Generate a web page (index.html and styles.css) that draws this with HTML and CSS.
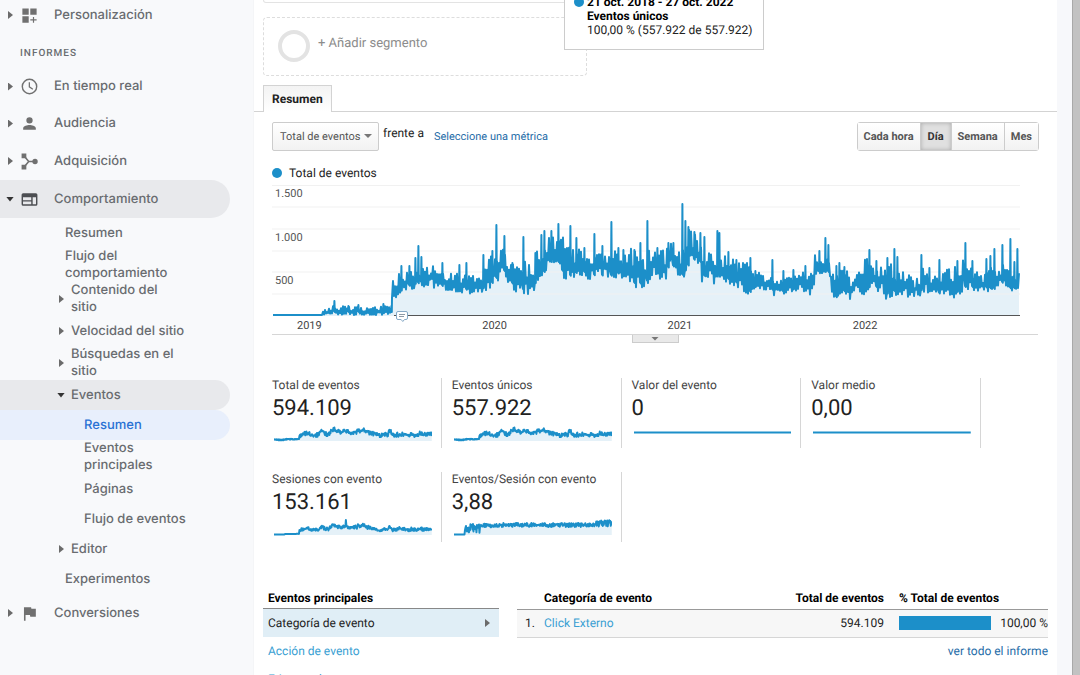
FILE: index.html
```html
<!DOCTYPE html>
<html lang="es">
<head>
<meta charset="utf-8">
<title>Eventos - Resumen</title>
<link rel="stylesheet" href="styles.css">
</head>
<body>
<div class="app">
  <nav class="sidebar" aria-label="Informes">
    <a class="nav-item nav-first" href="#"><span class="caret"></span><svg class="nav-icon" viewBox="0 0 24 24"><path d="M3 3h8v8H3zM13 3h8v8h-8zM3 13h8v8H3zM16.300 14h1.500v2.800H21v1.500h-3.200V21h-1.500v-2.700H13v-1.500h3.300z"/></svg>Personalización</a>
    <h2 class="nav-heading">INFORMES</h2>
    <a class="nav-item" href="#"><span class="caret"></span><svg class="nav-icon" viewBox="0 0 24 24"><path d="M12 2a10 10 0 1 0 0 20 10 10 0 0 0 0-20zm0 18.200a8.200 8.200 0 1 1 0-16.400 8.200 8.200 0 0 1 0 16.400zM12.600 6.500H11v6.300l4.800 3.200.9-1.300-4.100-2.700z"/></svg>En tiempo real</a>
    <a class="nav-item" href="#"><span class="caret"></span><svg class="nav-icon" viewBox="0 0 24 24"><path d="M12 12a4 4 0 1 0 0-8 4 4 0 0 0 0 8zm0 2c-2.670 0-8 1.340-8 4v2h16v-2c0-2.660-5.330-4-8-4z"/></svg>Audiencia</a>
    <a class="nav-item" href="#"><span class="caret"></span><svg class="nav-icon" viewBox="0 0 24 24"><path d="M2 2h6v6H2zM2 16h6v6H2z"/><circle cx="19" cy="12" r="3.400"/><path class="icon-line" d="M6 6l5 6-5 6M11 12h7"/></svg>Adquisición</a>
    <a class="nav-item nav-open" href="#"><span class="caret caret-down"></span><svg class="nav-icon" viewBox="0 0 24 24"><path fill-rule="evenodd" d="M4 4h16a2 2 0 0 1 2 2v12a2 2 0 0 1-2 2H4a2 2 0 0 1-2-2V6a2 2 0 0 1 2-2zM3.800 9.200v3.600h10.400V9.200zM3.800 14.500V18h10.400v-3.500zM16 9.200V18h4.200V9.200z"/></svg>Comportamiento</a>
    <a class="nav-sub" href="#">Resumen</a>
    <a class="nav-sub nav-two" href="#">Flujo del<br>comportamiento</a>
    <a class="nav-sub nav-two nav-parent" href="#"><span class="caret"></span><span>Contenido del<br>sitio</span></a>
    <a class="nav-sub nav-parent" href="#"><span class="caret"></span>Velocidad del sitio</a>
    <a class="nav-sub nav-two nav-parent" href="#"><span class="caret"></span><span>Búsquedas en el<br>sitio</span></a>
    <a class="nav-sub nav-parent nav-open" href="#"><span class="caret caret-down"></span>Eventos</a>
    <a class="nav-sub nav-leaf nav-current" href="#" aria-current="page">Resumen</a>
    <a class="nav-sub nav-two nav-leaf" href="#">Eventos<br>principales</a>
    <a class="nav-sub nav-leaf" href="#">Páginas</a>
    <a class="nav-sub nav-leaf" href="#">Flujo de eventos</a>
    <a class="nav-sub nav-parent" href="#"><span class="caret"></span>Editor</a>
    <a class="nav-sub" href="#">Experimentos</a>
    <a class="nav-item" href="#"><span class="caret"></span><svg class="nav-icon" viewBox="0 0 24 24"><path d="M14.400 6L14 4H5v17h2v-7h5.600l.4 2h7V6z"/></svg>Conversiones</a>
  </nav>

  <main class="report">
    <section class="segments">
      <div class="segment-current"></div>
      <button class="segment-add" type="button"><span class="ring"></span>+ Añadir segmento</button>
      <div class="tooltip" role="tooltip">
        <span class="dot"></span>
        <div><strong>21 oct. 2018 - 27 oct. 2022</strong><strong>Eventos únicos</strong><span>100,00 % (557.922 de 557.922)</span></div>
      </div>
    </section>

    <div class="tabs"><button class="tab" type="button">Resumen</button></div>

    <div class="controls">
      <button class="metric-select" type="button">Total de eventos<span class="select-arrow"></span></button>
      <span class="versus">frente a</span>
      <a class="metric-link" href="#">Seleccione una métrica</a>
      <div class="periods">
        <button type="button">Cada hora</button><button type="button" class="pressed" aria-pressed="true">Día</button><button type="button">Semana</button><button type="button">Mes</button>
      </div>
    </div>

    <section class="chart-block">
      <div class="legend"><span class="dot"></span>Total de eventos</div>
      <div class="chart">
        <svg class="plot" id="main-chart" viewBox="0 0 748 131" preserveAspectRatio="none"></svg>
        <span class="y-label y-1500">1.500</span>
        <span class="y-label y-1000">1.000</span>
        <span class="y-label y-500">500</span>
        <svg class="note" viewBox="0 0 12 11"><path d="M2 .5h8a1.500 1.500 0 0 1 1.500 1.500v5A1.500 1.500 0 0 1 10 8.500H8.500l-1.700 2-1.700-2H2A1.500 1.500 0 0 1 .5 7V2A1.500 1.500 0 0 1 2 .5z" fill="#fff" stroke="#86a9c6"/><path d="M3 3.500h6M3 5.500h5" stroke="#8d9aa6"/></svg>
      </div>
      <div class="x-axis"><span>2019</span><span>2020</span><span>2021</span><span>2022</span></div>
      <button class="drawer" type="button" aria-label="Anotaciones"><span class="select-arrow"></span></button>
    </section>

    <section class="metrics">
      <div class="metric"><span>Total de eventos</span><b>594.109</b><svg class="spark" data-kind="total" viewBox="0 0 158 18" preserveAspectRatio="none"></svg></div>
      <div class="metric"><span>Eventos únicos</span><b>557.922</b><svg class="spark" data-kind="total" viewBox="0 0 158 18" preserveAspectRatio="none"></svg></div>
      <div class="metric"><span>Valor del evento</span><b>0</b><svg class="spark" data-kind="flat" viewBox="0 0 158 18" preserveAspectRatio="none"></svg></div>
      <div class="metric"><span>Valor medio</span><b>0,00</b><svg class="spark" data-kind="flat" viewBox="0 0 158 18" preserveAspectRatio="none"></svg></div>
      <div class="metric"><span>Sesiones con evento</span><b>153.161</b><svg class="spark" data-kind="sessions" viewBox="0 0 158 18" preserveAspectRatio="none"></svg></div>
      <div class="metric"><span>Eventos/Sesión con evento</span><b>3,88</b><svg class="spark" data-kind="ratio" viewBox="0 0 158 18" preserveAspectRatio="none"></svg></div>
    </section>

    <section class="tables">
      <div class="dimensions">
        <h3>Eventos principales</h3>
        <a class="dimension selected" href="#">Categoría de evento<span class="caret"></span></a>
        <a class="dimension" href="#">Acción de evento</a>
        <a class="dimension" href="#">Etiqueta de evento</a>
      </div>
      <div class="results">
        <table>
          <thead><tr><th class="col-rank"></th><th>Categoría de evento</th><th class="number">Total de eventos</th><th class="col-share">% Total de eventos</th></tr></thead>
          <tbody><tr><td class="col-rank">1.</td><td><a href="#">Click Externo</a></td><td class="number">594.109</td><td class="col-share"><div class="share"><span class="bar"></span>100,00 %</div></td></tr></tbody>
        </table>
        <a class="full-report" href="#">ver todo el informe</a>
      </div>
    </section>
  </main>
  <div class="scrollbar"></div>
</div>
<script src="app.js"></script>
</body>
</html>
```
FILE: styles.css
```css
* { box-sizing: border-box; }
body { margin: 0; font-family: Roboto, "Liberation Sans", sans-serif; font-size: 12px; color: #222; background: #f7f8fb; text-rendering: geometricPrecision; }
a { text-decoration: none; color: #3a9fd3; }
button { font: inherit; color: inherit; text-rendering: inherit; }
h2, h3 { margin: 0; }

.app { display: flex; height: 100vh; overflow: hidden; }

.sidebar { flex: 0 0 254px; padding-right: 23px; background: #f8f9fb; border-right: 1px solid #f4f5f7; font: 500 13px/17px Inter, "Open Sans", sans-serif; }
.sidebar a { color: #696c70; }
.nav-item { display: flex; align-items: center; height: 38px; padding-left: 8px; }
.nav-first { height: 34px; padding-bottom: 4px; }
.nav-heading { height: 34px; padding: 12px 0 0 20px; font: 500 10px/16px Roboto, sans-serif; letter-spacing: 1px; color: #696c70; }
.nav-heading + .nav-item, .nav-heading + .nav-item + .nav-item { height: 37px; }
.nav-icon { width: 19px; height: 19px; margin: 0 15px 0 7px; fill: #707070; }
.icon-line { fill: none; stroke: #707070; stroke-width: 2; }
.caret { flex: none; width: 5px; height: 8px; background: #6b6b6b; clip-path: polygon(0 0, 100% 50%, 0 100%); }
.caret-down { width: 8px; height: 5px; background: #333; clip-path: polygon(0 0, 100% 0, 50% 100%); }
.nav-item .caret-down { margin: 0 -1px 0 -2px; }
.nav-open { background: #e8e9ec; border-radius: 0 19px 19px 0; }
.nav-open .nav-icon { fill: #4c4e52; }
.nav-sub { display: flex; align-items: center; height: 30px; padding-left: 65px; }
.nav-two { height: 34px; }
.nav-parent { padding-left: 59px; gap: 7px; }
.nav-parent .caret-down { margin: 0 -1px 0 -2px; }
.nav-leaf { padding-left: 84px; }
.sidebar .nav-current { color: #2a72d4; background: #e8effc; border-radius: 0 15px 15px 0; }

.report { flex: 1; min-width: 0; margin-right: 15px; background: #fff; }
.segments { position: relative; padding: 0 9px; }
.segment-current { width: 324px; height: 3px; border: 1px solid #e3e3e3; border-top: 0; border-radius: 0 0 3px 3px; }
.segment-add { display: flex; align-items: flex-start; width: 324px; height: 59px; margin-top: 14px; padding: 12px 14px; gap: 8px; border: 1px dashed #ddd; border-radius: 4px; background: none; font-size: 13px; line-height: 28px; color: #8c8c8c; }
.ring { width: 32px; height: 32px; border: 4px solid #e3e3e3; border-radius: 50%; }
.tooltip { position: absolute; left: 310px; bottom: 26px; display: flex; gap: 3px; width: 200px; padding: 0 7px 12px 9px; background: #fff; border: 1px solid #ccc; line-height: 14px; white-space: nowrap; }
.tooltip strong, .tooltip span { display: block; }
.tooltip strong { color: #000; font-weight: 700; }
.dot { flex: none; width: 10px; height: 10px; border-radius: 50%; background: #1c8fc9; }
.tooltip .dot { margin-top: 2px; }

.tabs { display: flex; margin-top: 9px; padding-left: 9px; border-bottom: 1px solid #d3d3d3; }
.tab { height: 27px; margin-bottom: -1px; padding: 0 8px; border: 1px solid #d3d3d3; border-bottom: 0; background: linear-gradient(#f3f3f3, #fff); font-weight: 700; }

.controls { display: flex; align-items: center; height: 48px; padding: 0 18px; }
.metric-select { display: flex; align-items: center; justify-content: space-between; width: 107px; height: 29px; padding: 0 6px 0 7px; border: 1px solid #ccc; border-radius: 2px; background: linear-gradient(#fff, #f2f2f2); font-size: 11px; color: #555; white-space: nowrap; }
.select-arrow { width: 8px; height: 4px; background: #777; clip-path: polygon(0 0, 100% 0, 50% 100%); }
.versus { margin: 0 10px 6px 4px; }
.metric-link { font-size: 11px; color: #1f6da8; }
.periods { display: flex; margin-left: auto; border: 1px solid #ccc; border-radius: 3px; }
.periods button { height: 27px; padding: 0 6px; border: 0; border-right: 1px solid #ccc; background: linear-gradient(#fff, #f2f2f2); font-size: 11px; font-weight: 700; color: #555; }
.periods button:last-child { border-right: 0; }
.periods .pressed { padding: 0 7px; background: #e0e0e0; box-shadow: inset 0 0 4px #aaa; color: #333; }

.chart-block { margin: 0 19px 0 18px; }
.legend { display: flex; align-items: center; gap: 7px; height: 25px; }
.chart { position: relative; margin-right: 18px; }
.plot { display: block; width: 100%; height: 131px; }
.y-label { position: absolute; left: 3px; font-size: 11px; line-height: 13px; color: #555; text-shadow: 0 0 2px #fff; }
.y-1500 { top: 2px; }
.y-1000 { top: 46px; }
.y-500 { top: 89px; }
.note { position: absolute; left: 124px; top: 126px; width: 12px; height: 11px; }
.x-axis { display: flex; height: 19px; padding-left: 25px; margin-right: 0; border-bottom: 1px solid #d6d6d6; font-size: 11px; line-height: 19px; color: #444; }
.x-axis span { flex: 0 0 25%; }
.drawer { display: flex; align-items: center; justify-content: center; width: 47px; height: 8px; margin: 0 auto; padding: 0; border: 1px solid #ccc; border-top: 0; background: #e9e9e9; }

.metrics { display: grid; grid-template-columns: repeat(4, 1fr); gap: 24px 10px; margin: 35px 76px 0 18px; }
.metric { display: flex; flex-direction: column; height: 70px; padding-right: 9px; border-right: 1px solid #d6d6d6; line-height: 14px; color: #444; white-space: nowrap; }
.metric b { font-size: 22px; line-height: 34px; font-weight: 400; color: #222; }
.spark { width: calc(100% - 2px); height: 18px; margin: -2px 0 0 2px; }

.tables { display: flex; gap: 18px; margin: 46px 9px 0; line-height: 20px; }
.dimensions { flex: 0 0 236px; }
.dimensions h3 { padding: 0 5px; font-size: 12px; line-height: 20px; color: #000; border-bottom: 1px solid #888; }
.dimension { display: flex; align-items: center; justify-content: space-between; height: 28px; padding: 0 9px 0 5px; }
.selected { background: #e0eef6; color: #222; }
.results { flex: 1; display: flex; flex-direction: column; }
table { width: 100%; border-collapse: collapse; }
th, td { padding: 0; text-align: left; }
th { height: 21px; color: #000; border-bottom: 1px solid #999; }
td { height: 28px; background: #f7f7f7; border-bottom: 1px solid #d6d6d6; }
.col-rank { width: 27px; padding-left: 8px; }
th.number, td.number { padding-right: 15px; text-align: right; }
.col-share { width: 149px; }
.share { display: flex; align-items: center; justify-content: space-between; }
.bar { width: 92px; height: 14px; background: #1c8fc9; }
.full-report { align-self: flex-end; color: #1f6da8; line-height: 26px; }

.scrollbar { flex: 0 0 8px; background: #c2c2c2; border-left: 1px solid #a9a9a9; }

.grid { stroke: #f1f1f1; }
.area { fill: #e5f1f8; }
.line { fill: none; stroke: #1c8fc9; stroke-width: 2; stroke-linejoin: round; }
.spark .line { stroke-width: 2; }
.baseline { stroke: #555; stroke-width: 1; }
```
FILE: app.js
```js
// Each row: day offset along the plot, upper y and lower y of the daily range.
const range = [
  [0, 130, 130], [50, 130, 130], [51, 126, 130], [60, 123, 130], [95, 124, 130], [110, 122, 130], [119, 123, 130],
  [120, 100, 112], [125, 94, 111], [136, 90, 104], [142, 87, 102], [152, 82, 100], [165, 85, 102], [178, 92, 107],
  [192, 94, 108], [208, 94, 106], [216, 80, 106], [224, 68, 96], [231, 66, 87], [236, 84, 97], [246, 82, 108],
  [262, 86, 108], [264, 72, 94], [272, 65, 90], [278, 58, 80], [288, 58, 80], [291, 60, 93], [300, 70, 94],
  [308, 68, 88], [318, 73, 93], [338, 65, 94], [348, 70, 91], [362, 70, 101], [373, 73, 102], [383, 70, 90],
  [393, 73, 98], [398, 61, 77], [406, 73, 96], [411, 67, 92], [415, 50, 85], [420, 53, 77], [428, 60, 80],
  [430, 73, 95], [438, 70, 90], [440, 74, 99], [448, 70, 92], [450, 77, 97], [458, 77, 97], [468, 83, 103],
  [478, 83, 110], [483, 90, 105], [498, 96, 105], [503, 95, 112], [515, 92, 109], [528, 91, 105], [541, 92, 109],
  [543, 74, 90], [557, 77, 90], [560, 93, 110], [563, 98, 118], [566, 90, 110], [574, 90, 109], [580, 97, 114],
  [584, 90, 105], [590, 90, 113], [593, 77, 105], [608, 88, 105], [614, 83, 112], [628, 85, 107], [638, 95, 111],
  [646, 98, 111], [652, 85, 105], [660, 91, 111], [673, 90, 112], [682, 89, 112], [691, 76, 105], [703, 90, 105],
  [712, 93, 105], [722, 86, 107], [729, 83, 100], [739, 90, 107], [748, 87, 105]
];
const peaks = [
  [62, 116], [76, 121], [86, 120], [111, 119], [119, 121], [129, 81], [137, 81], [143, 73], [146, 61], [149, 72],
  [170, 78], [187, 80], [194, 78], [211, 70], [220, 66], [224, 40], [232, 51], [240, 78], [251, 52], [263, 68],
  [269, 50], [272, 46], [279, 46], [286, 39], [290, 55], [298, 41], [304, 53], [312, 63], [322, 49], [330, 61],
  [339, 37], [346, 63], [351, 65], [362, 65], [368, 58], [375, 36], [385, 63], [396, 58], [401, 58], [410, 19],
  [413, 36], [416, 42], [422, 47], [428, 48], [432, 52], [445, 46], [447, 48], [456, 67], [464, 75], [478, 73],
  [483, 86], [500, 75], [511, 86], [521, 85], [533, 81], [547, 66], [553, 53], [556, 60], [564, 81], [567, 78],
  [572, 82], [597, 65], [604, 76], [615, 73], [622, 64], [625, 72], [649, 70], [657, 83], [667, 75], [685, 76],
  [693, 58], [700, 76], [714, 74], [718, 71], [722, 64], [730, 60], [738, 54], [742, 77], [745, 64]
];
const peakAt = new Map(peaks);

function random(seed) {
  return () => (seed = (seed * 16807) % 2147483647) / 2147483647;
}
function between(x) {
  let i = 1;
  while (i < range.length - 1 && range[i][0] < x) i++;
  const [a, b] = [range[i - 1], range[i]];
  const t = (x - a[0]) / (b[0] - a[0]);
  return [a[1] + (b[1] - a[1]) * t, a[2] + (b[2] - a[2]) * t];
}
function draw(svg, points, base, extra = "") {
  const line = points.map(p => p[0].toFixed(1) + "," + p[1].toFixed(1)).join(" ");
  const last = points[points.length - 1][0];
  svg.innerHTML = `<polygon class="area" points="${points[0][0]},${base} ${line} ${last},${base}"/>${extra}<polyline class="line" points="${line}"/>`;
}

const rand = random(4217);
const daily = [];
for (let x = 1; x < 748; x++) {
  const [top, bottom] = between(x);
  const mid = (top + bottom) / 2;
  if (peakAt.has(x)) {
    daily.push([x, bottom - 4], [x + .4, peakAt.get(x)], [x + .8, bottom - 3]);
  } else {
    const swing = x % 2 ? (top - mid) * (1.5 * rand() + .1) : (bottom - mid) * (1.1 * rand() + .1);
    daily.push([x, Math.min(130, mid + swing)]);
  }
}
let grid = "";
for (const y of [.5, 22, 44, 66, 87, 109]) grid += `<path class="grid" d="M0 ${y}H748"/>`;
grid += '<path class="baseline" d="M122 130.500H748"/>';
draw(document.getElementById("main-chart"), daily, 131, grid);

document.querySelectorAll(".spark").forEach((svg, n) => {
  const kind = svg.dataset.kind;
  const next = random(91 + (kind === "total" ? 0 : n));
  const points = [];
  for (let x = 0; x <= 158; x += .5) {
    const [top, bottom] = between(x * 748 / 158);
    const height = 131 - (top + bottom) / 2;
    let y = 16.5 - height * .17 - (height > 8 ? (next() - .4) * 4 : next());
    if (kind === "sessions") y = x === 72 ? 2 : 16.5 - height * .14 - (height > 8 ? (next() - .3) * 3 : 0);
    if (kind === "ratio") {
      const level = x < 11 ? 0 : x < 26 ? 6 : x < 45 ? 9 : x > 140 ? 11 : 9.5;
      y = 16.5 - level - (x < 11 ? 0 : (next() - .5) * (x < 26 ? 9 : x > 140 ? 7 : 4));
    }
    if (kind === "flat") y = 8.5;
    points.push([x, Math.max(1, y)]);
  }
  draw(svg, points, kind === "flat" ? 8.5 : 17);
});
```
